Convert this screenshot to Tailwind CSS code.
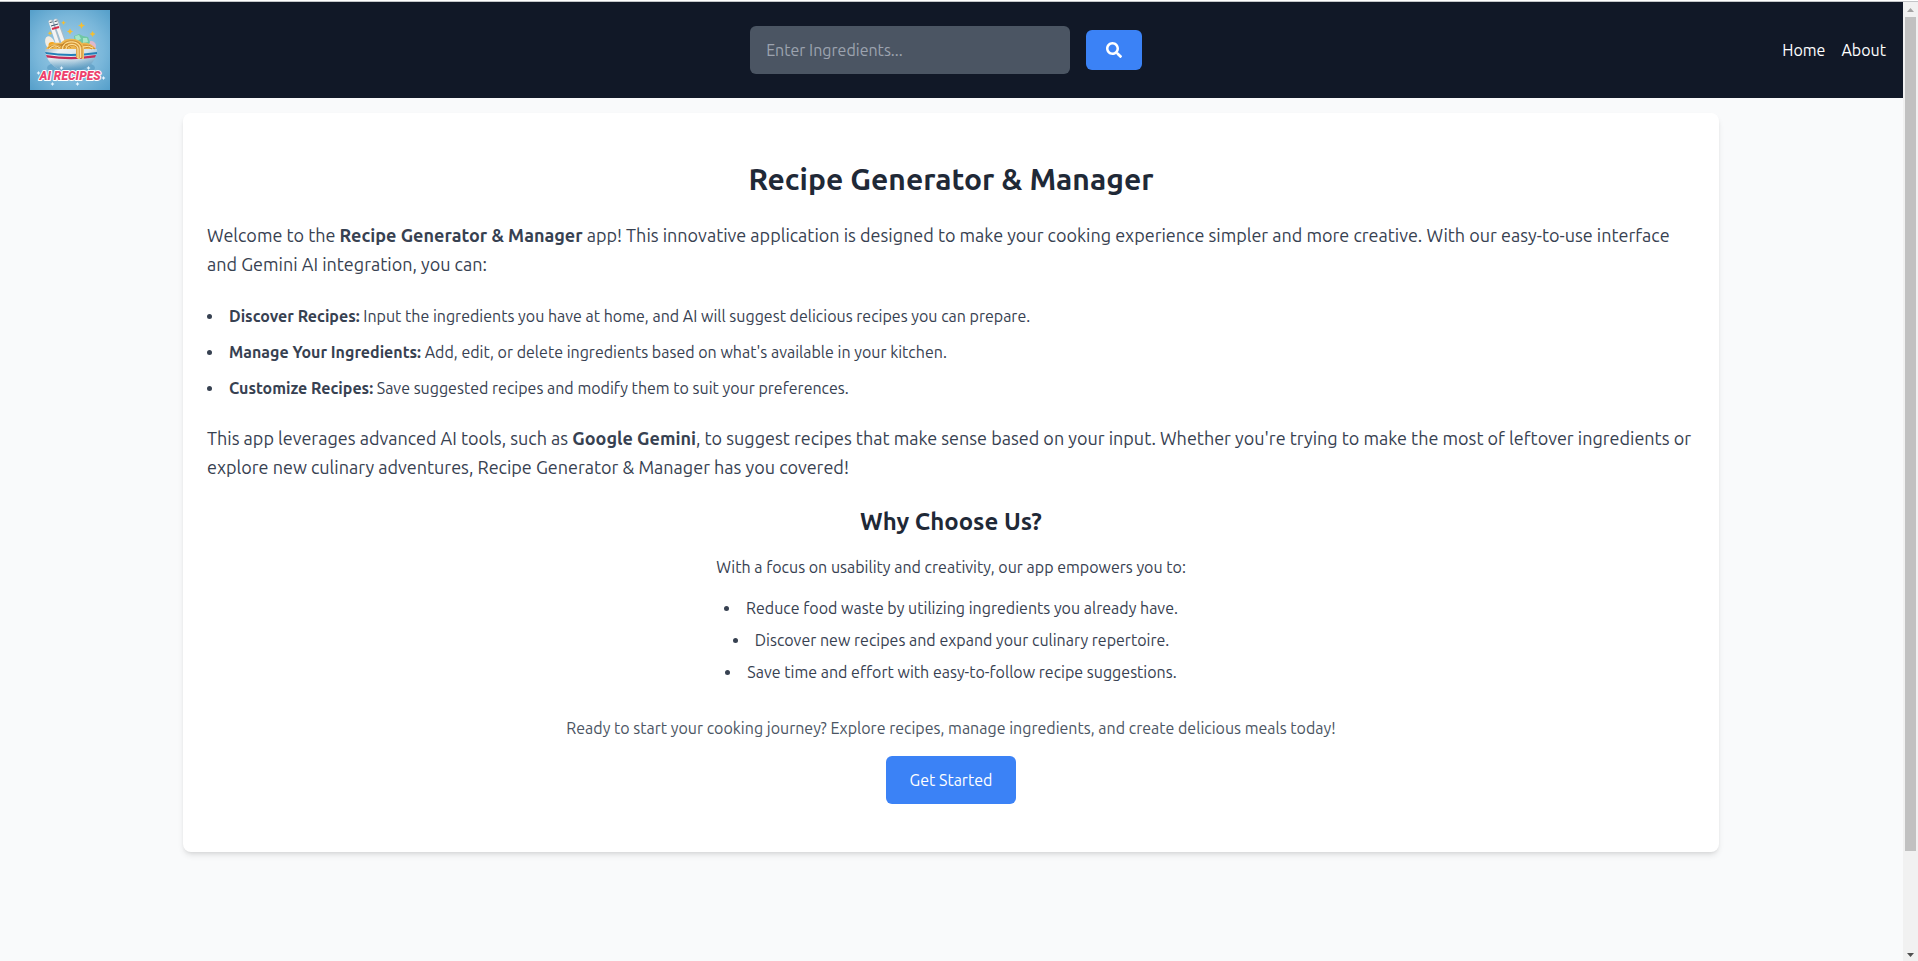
<!DOCTYPE html>
<html lang="en">
<head>
<meta charset="utf-8">
<meta name="viewport" content="width=device-width, initial-scale=1">
<title>Recipe Generator &amp; Manager</title>
<script src="https://cdn.jsdelivr.net/npm/@tailwindcss/browser@4"></script>
</head>
<body class="flex min-h-screen flex-col bg-[#f9fafb] font-[Ubuntu,'Noto_Sans',sans-serif] text-base text-[#374151]">
  <div class="h-[2px] shrink-0 border-b border-[#c3c5c8] bg-white"></div>
  <div class="flex grow">
    <div class="min-w-0 grow">
      <header class="flex items-center justify-between bg-[#111827] py-2 pr-[17px] pl-[30px]">
        <a href="#" aria-label="AI Recipes">
          <svg class="size-20" viewBox="0 0 80 80" role="img" aria-label="AI Recipes logo">
            <defs>
              <radialGradient id="sky" cx="50%" cy="50%" r="70%"><stop offset="0" stop-color="#a3cfe8"/><stop offset=".6" stop-color="#7ab7da"/><stop offset="1" stop-color="#559fca"/></radialGradient>
              <linearGradient id="bowl" x1="0" x2="1" y1="0" y2=".5"><stop offset="0" stop-color="#9fb9ca"/><stop offset=".25" stop-color="#edf1f3"/><stop offset=".7" stop-color="#d3e2eb"/><stop offset="1" stop-color="#86b3cf"/></linearGradient>
              <linearGradient id="base" x1="0" x2="0" y1="0" y2="1"><stop offset=".4" stop-color="#5b9dc4" stop-opacity="0"/><stop offset="1" stop-color="#4e93bd"/></linearGradient>
            </defs>
            <rect width="80" height="80" fill="url(#sky)"/>
            <ellipse cx="41" cy="58" rx="24" ry="7" fill="#4b8fb9" opacity=".5"/>
            <g stroke-linecap="round" fill="none">
              <path d="M21 12l8 24M26 11l8 22" stroke="#a9bac7" stroke-width="5"/>
              <path d="M20.500 12l8 24M25.500 11l8 22" stroke="#f2f3f3" stroke-width="3.600"/>
              <path d="M22 19l7-2" stroke="#d62f4d" stroke-width="2" stroke-linecap="butt"/>
              <path d="M21 16l7-2" stroke="#3c526c" stroke-width="1" stroke-linecap="butt"/>
              <path d="M20 12.500l2-.5M25 11.500l2-.5" stroke="#4a5966" stroke-width="1"/>
            </g>
            <ellipse cx="20" cy="33" rx="4.500" ry="7" transform="rotate(-22 20 33)" fill="#f2ece2"/>
            <ellipse cx="22" cy="35" rx="3.500" ry="3" fill="#f3a41d"/>
            <circle cx="61" cy="36" r="5" fill="#dfb8ca"/>
            <path d="M44 26l5-2 4 2 5 1 2 5-3 6-12-2z" fill="#70c8a4"/>
            <path d="M45 26l4-1 2 4-5 2zM53 28l4 0 1 4-5 1z" fill="#a7e5c7"/>
            <path d="M16 39c3-5 9-7 15-6 3-5 16-6 21 0 6-1 11 2 14 6z" fill="#edb64e"/>
            <path d="M15 39h52c0 12-9 21-21 22H35C24 59 15 50 15 39z" fill="url(#bowl)"/>
            <path d="M15 39h52c0 12-9 21-21 22H35C24 59 15 50 15 39z" fill="url(#base)"/>
            <path d="M15 42q26 4 52 0v2q-26 4-51 0z" fill="#237fb7"/>
            <path d="M16 45q25 4 50 0l-1 2.500q-24 3.500-48 0z" fill="#c32c59"/>
            <path d="M46 37h8v12h-2l-1-2-1 2h-2l-2-2z" fill="#f2c36b"/>
            <g fill="none" stroke="#b97826" stroke-width=".7">
              <path d="M18 38q6-5 12 0M22 38q7-7 14 0M27 38q8-8 14 0M31 39c0-11 21-11 21 0v9M34 39c0-8 15-8 15 0v9M37 39c0-5 10-5 10 0v8M53 35q7-1 12 4M54 38q5-2 8 1"/>
            </g>
            <g fill="none" stroke="#ffe2a0" stroke-width="1">
              <path d="M19 39q5-6 11-1M32.500 39c0-9.500 18-9.500 18 0v9M36 39c0-6 12-6 12 0v9M53 37q6-2 10 1"/>
            </g>
            <g fill="#f4be32">
              <path d="M51.500 12l1 2.500 2.500 1-2.500 1-1 2.500-1-2.500-2.500-1 2.500-1z"/>
              <path d="M62.500 21l1 2 2 1-2 1-1 2-1-2-2-1 2-1z"/>
              <path d="M40 18.500l1 2 2 1-2 1-1 2-1-2-2-1 2-1z"/>
              <path d="M33.500 10.500l.7 1.600 1.600.7-1.600.7-.7 1.600-.7-1.600-1.600-.7 1.600-.7z"/>
              <path d="M20 21l.7 1.600 1.600.7-1.600.7-.7 1.600-.7-1.600-1.600-.7 1.600-.7z"/>
            </g>
            <g fill="#e5f5ff">
              <path d="M8.500 61l.7 1.300 1.300.7-1.300.7-.7 1.300-.7-1.300-1.300-.7 1.300-.7zM73.500 66l.7 1.300 1.300.7-1.300.7-.7 1.300-.7-1.300-1.300-.7 1.300-.7zM22.500 72l.7 1.300 1.300.7-1.300.7-.7 1.300-.7-1.300-1.300-.7 1.300-.7zM47.500 72l.7 1.300 1.300.7-1.300.7-.7 1.300-.7-1.300-1.300-.7 1.300-.7zM31.500 56l.7 1.300 1.300.7-1.300.7-.7 1.300-.7-1.300-1.300-.7 1.300-.7zM58.500 56l.7 1.300 1.300.7-1.300.7-.7 1.300-.7-1.300-1.300-.7 1.300-.7z"/>
            </g>
            <text x="40" y="70" text-anchor="middle" class="fill-[#ed416d] stroke-white font-[Roboto,sans-serif] text-[12px] font-black italic" stroke-width="2" stroke-linejoin="round" paint-order="stroke">AI RECIPES</text>
          </svg>
        </a>
        <form class="flex items-center gap-4" onsubmit="return false">
          <input type="text" aria-label="Ingredients" placeholder="Enter Ingredients..." class="h-12 w-80 rounded-md bg-[#4b5563] px-4 text-white outline-none placeholder:text-[#9ca3af]">
          <button type="submit" aria-label="Search" class="flex h-10 w-14 items-center justify-center rounded-md bg-[#3b82f6] text-white">
            <svg class="size-4" viewBox="0 0 512 512" fill="currentColor" aria-hidden="true"><path d="M505 442.700L405.300 343c-4.500-4.500-10.600-7-17-7H372c27.600-35.300 44-79.700 44-128C416 93.100 322.900 0 208 0S0 93.100 0 208s93.100 208 208 208c48.300 0 92.700-16.400 128-44v16.300c0 6.400 2.500 12.500 7 17l99.700 99.700c9.400 9.400 24.600 9.400 33.900 0l28.300-28.300c9.400-9.400 9.400-24.600.1-34zM208 336c-70.700 0-128-57.200-128-128 0-70.700 57.200-128 128-128 70.700 0 128 57.200 128 128 0 70.700-57.200 128-128 128z"/></svg>
          </button>
        </form>
        <nav class="flex gap-4 text-white">
          <a href="#">Home</a>
          <a href="#">About</a>
        </nav>
      </header>
      <div class="pt-[15px] pr-px">
        <main class="mx-auto max-w-[1536px] rounded-lg bg-white px-6 py-12 shadow-md">
          <h1 class="mb-6 text-center text-3xl leading-9 font-bold text-[#1f2937]">Recipe Generator &amp; Manager</h1>
          <p class="mb-6 text-lg leading-relaxed">Welcome to the <strong class="font-bold">Recipe Generator &amp; Manager</strong> app! This innovative application is designed to make your cooking experience simpler and more creative. With our easy-to-use interface and Gemini AI integration, you can:</p>
          <ul class="mb-6 list-inside list-disc space-y-3">
            <li><strong class="font-bold">Discover Recipes:</strong> Input the ingredients you have at home, and AI will suggest delicious recipes you can prepare.</li>
            <li><strong class="font-bold">Manage Your Ingredients:</strong> Add, edit, or delete ingredients based on what's available in your kitchen.</li>
            <li><strong class="font-bold">Customize Recipes:</strong> Save suggested recipes and modify them to suit your preferences.</li>
          </ul>
          <p class="mb-6 text-lg leading-relaxed">This app leverages advanced AI tools, such as <strong class="font-bold">Google Gemini</strong>, to suggest recipes that make sense based on your input. Whether you're trying to make the most of leftover ingredients or explore new culinary adventures, Recipe Generator &amp; Manager has you covered!</p>
          <section class="text-center">
            <h2 class="mb-[17px] text-2xl leading-8 font-bold text-[#1f2937]">Why Choose Us?</h2>
            <p class="mb-[17px]">With a focus on usability and creativity, our app empowers you to:</p>
            <ul class="list-inside list-disc space-y-2">
              <li>Reduce food waste by utilizing ingredients you already have.</li>
              <li>Discover new recipes and expand your culinary repertoire.</li>
              <li>Save time and effort with easy-to-follow recipe suggestions.</li>
            </ul>
          </section>
          <div class="mt-8 flex flex-col items-center gap-4 text-center">
            <p class="text-[#4b5563]">Ready to start your cooking journey? Explore recipes, manage ingredients, and create delicious meals today!</p>
            <button type="button" class="rounded-md bg-[#3b82f6] px-6 py-3 text-white">Get Started</button>
          </div>
        </main>
      </div>
    </div>
    <div class="flex w-[15px] shrink-0 flex-col items-center bg-[#f1f1f1]" aria-hidden="true">
      <svg class="h-[15px] w-[15px] shrink-0" viewBox="0 0 15 15" fill="#a3a3a3"><path d="M4 10h7L7.500 6z"/></svg>
      <div class="flex w-[11px] grow flex-col"><div class="grow-[834] bg-[#c1c1c1]"></div><div class="grow-[95]"></div></div>
      <svg class="h-[15px] w-[15px] shrink-0" viewBox="0 0 15 15" fill="#505050"><path d="M4 7h7L7.500 11z"/></svg>
    </div>
  </div>
</body>
</html>
